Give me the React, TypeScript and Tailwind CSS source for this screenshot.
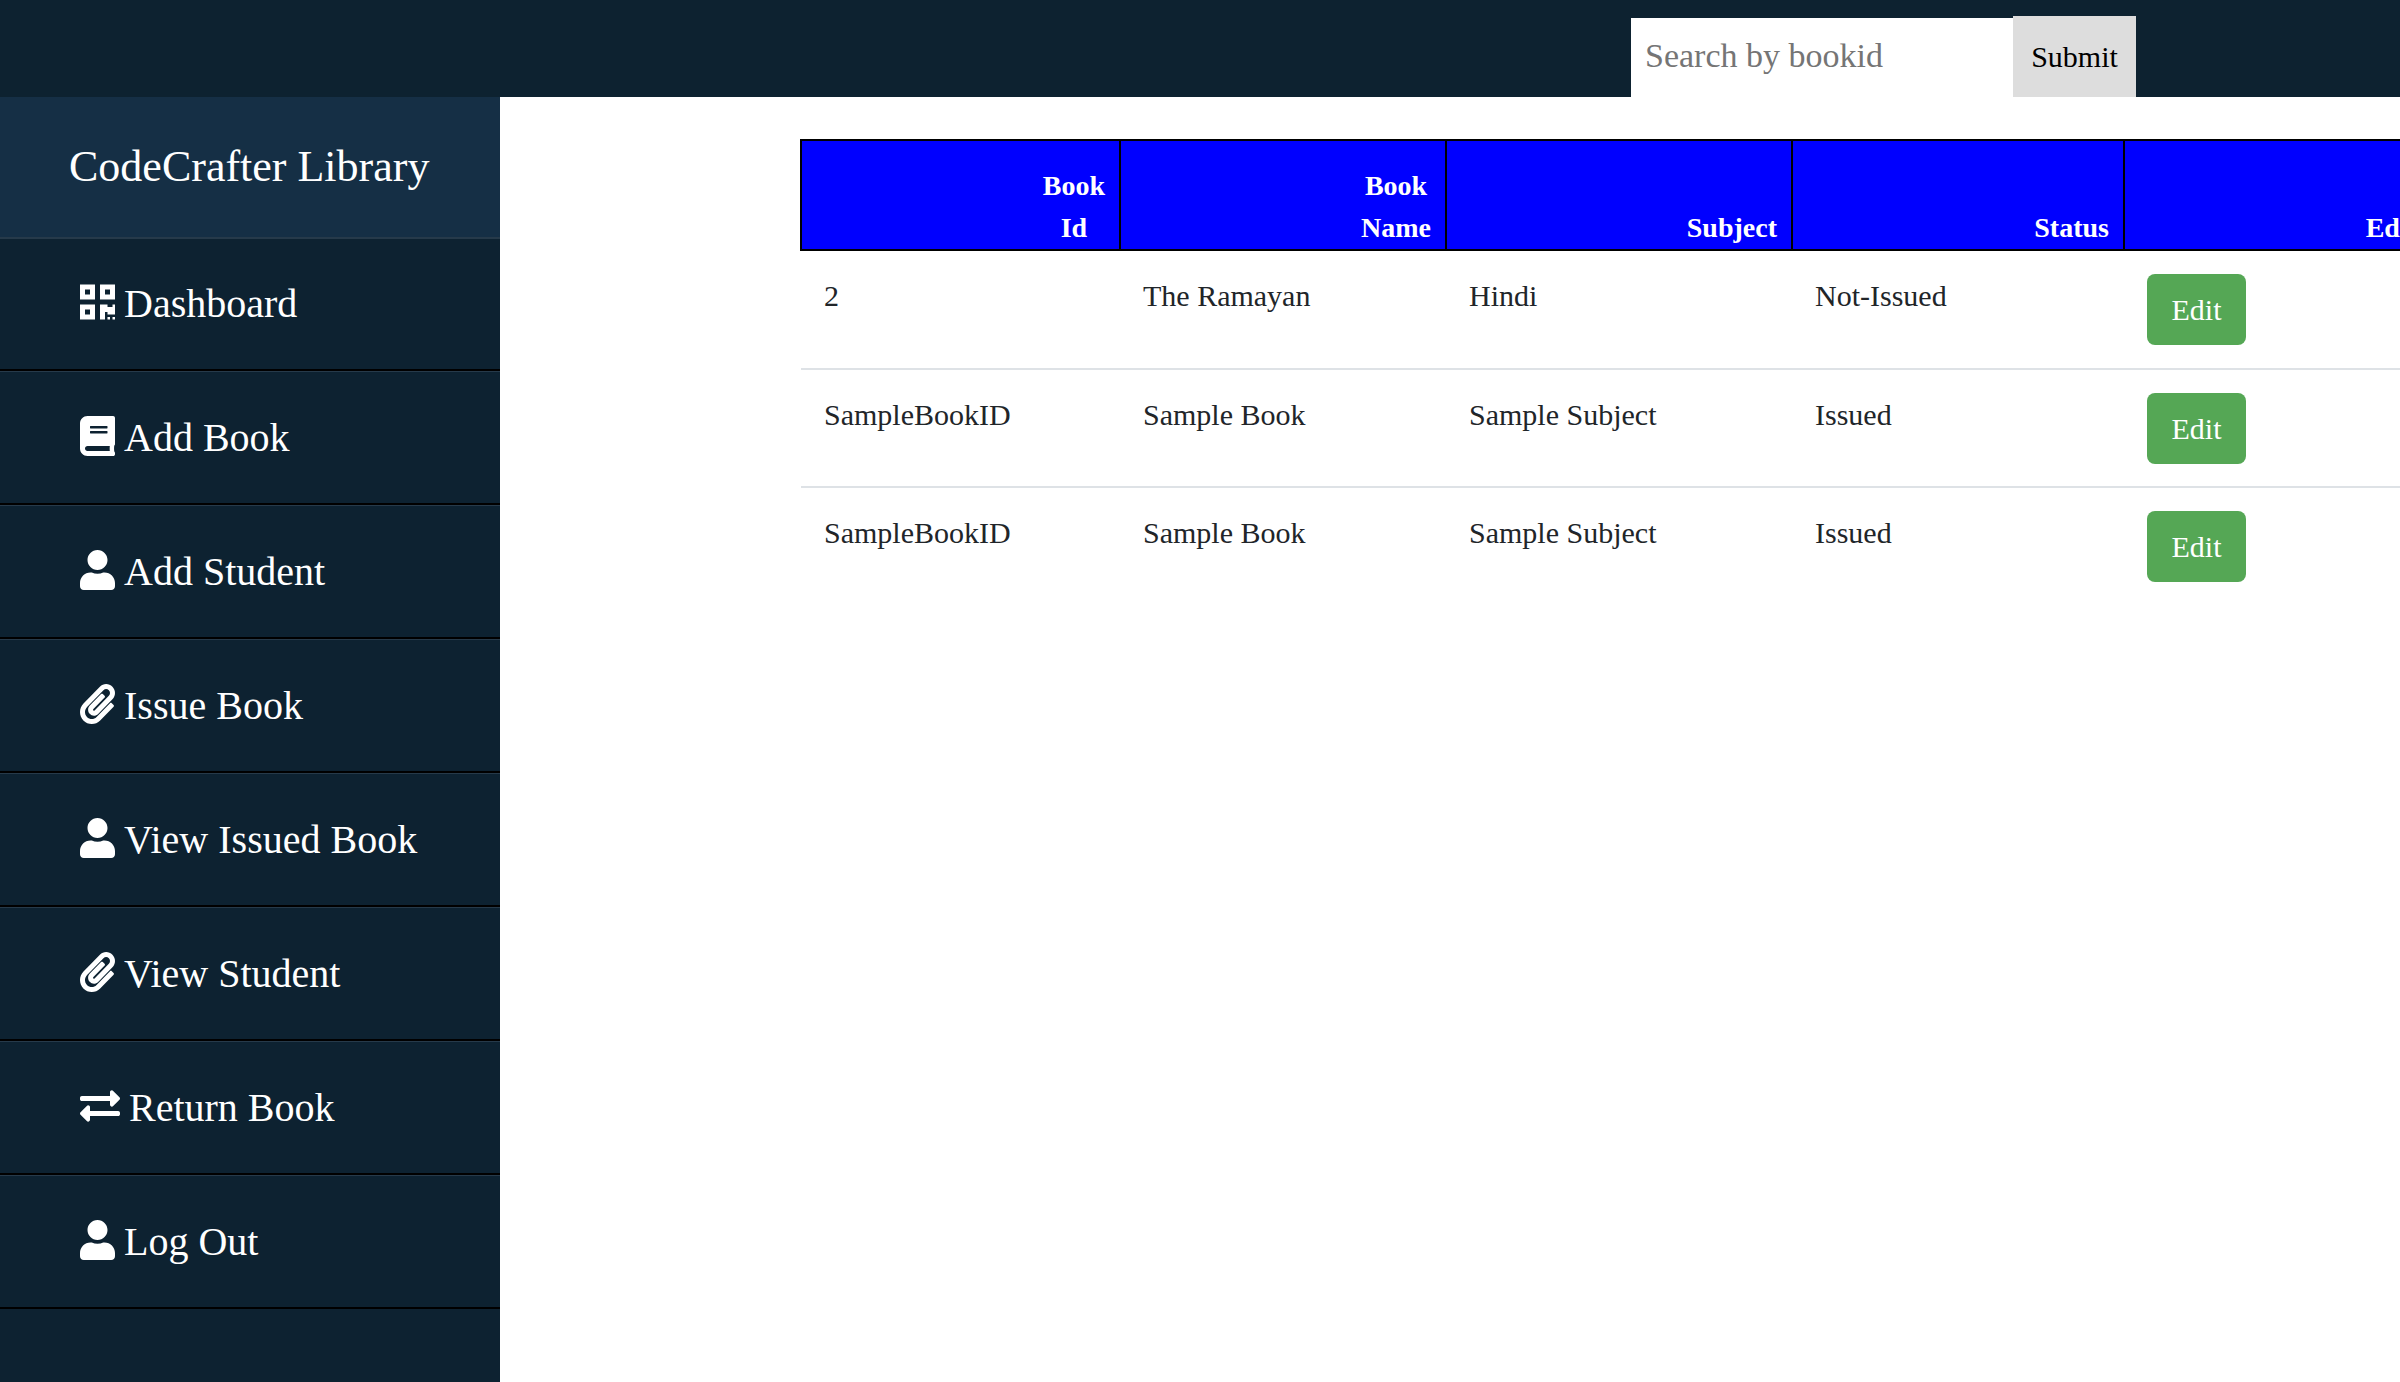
import React from 'react';
import { FaQrcode, FaBook, FaUser, FaPaperclip, FaExchangeAlt } from 'react-icons/fa';

const navItems = [
    { label: 'Dashboard', icon: FaQrcode, iconClass: 'w-[35px]' },
    { label: 'Add Book', icon: FaBook, iconClass: 'w-[35px]' },
    { label: 'Add Student', icon: FaUser, iconClass: 'w-[35px]' },
    { label: 'Issue Book', icon: FaPaperclip, iconClass: 'w-[35px]' },
    { label: 'View Issued Book', icon: FaUser, iconClass: 'w-[35px]' },
    { label: 'View Student', icon: FaPaperclip, iconClass: 'w-[35px]' },
    { label: 'Return Book', icon: FaExchangeAlt, iconClass: 'w-[40px]' },
    { label: 'Log Out', icon: FaUser, iconClass: 'w-[35px]' },
];

const books = [
    { id: '2', name: 'The Ramayan', subject: 'Hindi', status: 'Not-Issued' },
    { id: 'SampleBookID', name: 'Sample Book', subject: 'Sample Subject', status: 'Issued' },
    { id: 'SampleBookID', name: 'Sample Book', subject: 'Sample Subject', status: 'Issued' },
];

const Th: React.FC<{ children: React.ReactNode; className: string }> = ({ children, className }) => (
    <th className={`border-2 border-black bg-[#0000ff] text-white text-[28px] leading-[42px] font-bold text-right align-bottom pr-[14px] pb-0 ${className}`}>
        <span className="inline-block w-min text-center">{children}</span>
    </th>
);

const Td: React.FC<{ children: React.ReactNode }> = ({ children }) => (
    <td className="px-[23px] pt-[22px] pb-[21px] align-top text-[30px] leading-[45px] text-[#212529]">{children}</td>
);

export default function App() {
    return (
        <div className="h-screen w-full overflow-hidden bg-white font-['Liberation_Serif',serif]">
            <header className="h-[97px] bg-[#0d2230] flex justify-end items-end pr-[264px]">
                <form className="flex items-end" onSubmit={(e) => e.preventDefault()}>
                    <input
                        type="text"
                        placeholder="Search by bookid"
                        className="w-[382px] h-[79px] bg-white pl-[14px] pr-[15px] pb-[3px] text-[34px] text-black outline-none placeholder:text-[#757575]"
                    />
                    <button type="submit" className="w-[123px] h-[81px] bg-[#dddddd] text-[30px] text-black">
                        Submit
                    </button>
                </form>
            </header>

            <div className="flex h-[1285px]">
                <aside className="w-[500px] shrink-0 bg-[#0d2231] text-white">
                    <div className="h-[140px] bg-[#152f45] flex items-center pl-[69px] text-[44px]">CodeCrafter Library</div>
                    <ul>
                        {navItems.map((item) => {
                            const Icon = item.icon;
                            return (
                                <li
                                    key={item.label}
                                    className="h-[134px] flex items-center gap-[9px] pl-[80px] text-[40px] border-t first:border-t-2 border-t-[#263a4a] border-b-2 border-b-black"
                                >
                                    <Icon className={`${item.iconClass} h-[40px] mb-1 shrink-0`} />
                                    <span>{item.label}</span>
                                </li>
                            );
                        })}
                    </ul>
                </aside>

                <main className="flex-1 min-w-0 pl-[300px] pt-[42px]">
                    <table className="table-fixed border-collapse w-[1631px]">
                        <thead>
                            <tr className="h-[110px]">
                                <Th className="w-[319px]">Book Id</Th>
                                <Th className="w-[326px]">Book Name</Th>
                                <Th className="w-[346px]">Subject</Th>
                                <Th className="w-[332px]">Status</Th>
                                <Th className="w-[308px]">Edit</Th>
                            </tr>
                        </thead>
                        <tbody>
                            {books.map((book, i) => (
                                <tr key={i} className="first:h-[119px] border-b-2 border-[#dee2e6] last:border-b-0">
                                    <Td>{book.id}</Td>
                                    <Td>{book.name}</Td>
                                    <Td>{book.subject}</Td>
                                    <Td>{book.status}</Td>
                                    <td className="px-[23px] pt-[23px] pb-[22px] align-top">
                                        <button className="w-[99px] h-[71px] rounded-lg bg-[#55a755] text-white text-[30px]">Edit</button>
                                    </td>
                                </tr>
                            ))}
                        </tbody>
                    </table>
                </main>
            </div>
        </div>
    );
}
